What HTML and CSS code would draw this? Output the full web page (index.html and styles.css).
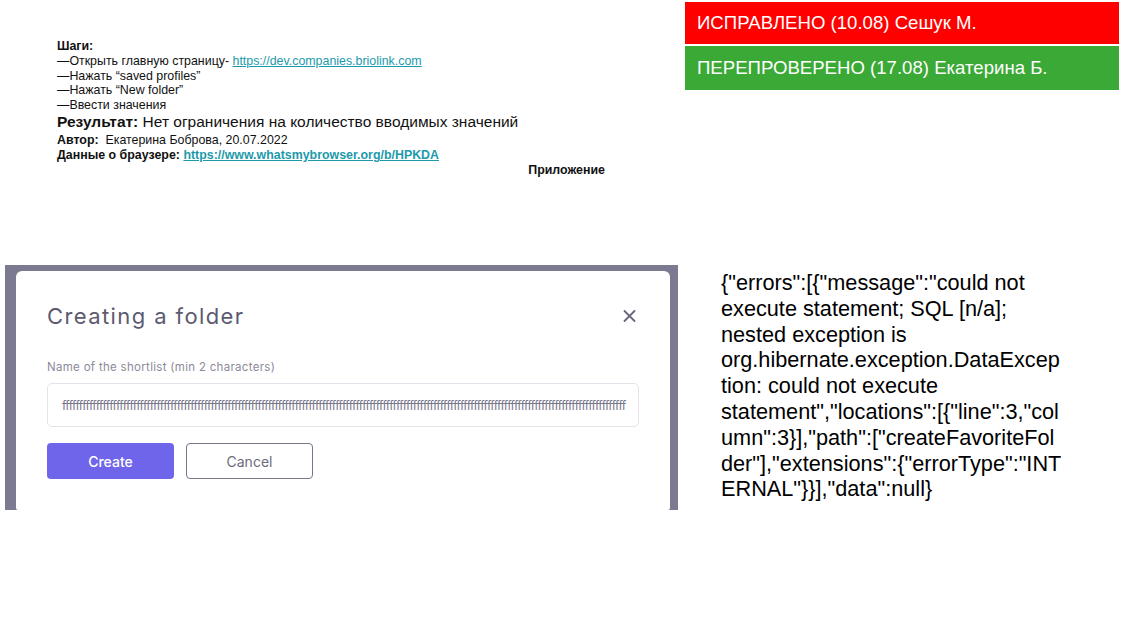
FILE: index.html
```html
<!DOCTYPE html>
<html lang="ru">
<head>
<meta charset="utf-8">
<title>Bug report</title>
<link rel="stylesheet" href="styles.css">
</head>
<body>
<div class="page">
  <div class="top">
    <div class="notes">
      <div class="line"><b>Шаги:</b></div>
      <div class="line">—Открыть главную страницу- <a class="link" href="#">https://dev.companies.briolink.com</a></div>
      <div class="line">—Нажать “saved profiles”</div>
      <div class="line">—Нажать “New folder”</div>
      <div class="line">—Ввести значения</div>
      <div class="result"><b>Результат:</b> Нет ограничения на количество вводимых значений</div>
      <div class="line meta"><b>Автор:</b>&nbsp; Екатерина Боброва, 20.07.2022</div>
      <div class="line"><b>Данные о браузере: <a class="link" href="#">https://www.whatsmybrowser.org/b/HPKDA</a></b></div>
      <div class="line attach"><b>Приложение</b></div>
    </div>
    <div class="status">
      <div class="badge red">ИСПРАВЛЕНО (10.08) Сешук М.</div>
      <div class="badge green">ПЕРЕПРОВЕРЕНО (17.08) Екатерина Б.</div>
    </div>
  </div>
  <div class="bottom">
    <div class="shot">
      <div class="dialog">
        <div class="dlg-head">
          <div class="dlg-title">Creating a folder</div>
          <svg class="close" width="13" height="12" viewBox="0 0 13 12"><path d="M1.5 1 L11.5 11 M11.5 1 L1.5 11" stroke="#67667a" stroke-width="1.8" stroke-linecap="round"/></svg>
        </div>
        <div class="dlg-label">Name of the shortlist (min 2 characters)</div>
        <div class="dlg-input"><div class="dlg-value">fffffffffffffffffffffffffffffffffffffffffffffffffffffffffffffffffffffffffffffffffffffffffffffffffffffffffffffffffffffffffffffffffffffffffffffffffffffffffffffffffffffff</div></div>
        <div class="dlg-buttons">
          <div class="btn btn-primary">Create</div>
          <div class="btn btn-outline">Cancel</div>
        </div>
      </div>
    </div>
    <div class="json">{"errors":[{"message":"could not<br>execute statement; SQL [n/a];<br>nested exception is<br>org.hibernate.exception.DataExcep<br>tion: could not execute<br>statement","locations":[{"line":3,"col<br>umn":3}],"path":["createFavoriteFol<br>der"],"extensions":{"errorType":"INT<br>ERNAL"}}],"data":null}</div>
  </div>
</div>
</body>
</html>
```

FILE: styles.css
```css
html, body {
  margin: 0;
  padding: 0;
  background: #ffffff;
}

.page {
  width: 1121px;
  height: 629px;
  font-family: "Liberation Sans", Arial, sans-serif;
  color: #000;
}

.top {
  display: flex;
  height: 265px;
}

.notes {
  margin-left: 57px;
  width: 548px;
  padding-top: 39px;
  font-size: 12.4px;
  color: #111;
}

.line {
  line-height: 14.8px;
  white-space: nowrap;
}

.link {
  color: #1c9aab;
  text-decoration: underline;
}

.result {
  font-size: 15.5px;
  line-height: 18px;
  white-space: nowrap;
}

.meta {
  margin-top: 2px;
  line-height: 15px;
}

.attach {
  text-align: right;
  line-height: 15px;
}

.status {
  margin-left: 80px;
  margin-top: 2px;
  width: 434px;
  display: flex;
  flex-direction: column;
  gap: 2px;
}

.badge {
  color: #fff;
  font-size: 18.6px;
  padding-left: 12px;
  display: flex;
  align-items: center;
}

.red {
  background: #ff0000;
  height: 42px;
}

.green {
  background: #3aa935;
  height: 44px;
}

.bottom {
  display: flex;
}

.shot {
  margin-left: 5px;
  width: 673px;
  height: 245px;
  box-sizing: border-box;
  background: #7b7a91;
  padding: 6px 8px 0 11px;
}

.dialog {
  height: 100%;
  box-sizing: border-box;
  background: #fff;
  border-radius: 6px 6px 2px 2px;
  padding: 31px 31px 0 31px;
  font-family: Inter, "Noto Sans", sans-serif;
}

.dlg-head {
  display: flex;
  justify-content: space-between;
  align-items: center;
  height: 28px;
}

.dlg-title {
  font-size: 22px;
  color: #5c5a70;
  letter-spacing: 1.4px;
}

.close {
  margin-right: 3px;
}

.dlg-label {
  margin-top: 29px;
  font-size: 11.5px;
  line-height: 16px;
  color: #8c8a9b;
  letter-spacing: 0.3px;
}

.dlg-input {
  margin-top: 8px;
  height: 44px;
  box-sizing: border-box;
  border: 1px solid #e4e3eb;
  border-radius: 5px;
  padding: 0 13px 0 14px;
  display: flex;
  align-items: center;
}

.dlg-value {
  white-space: nowrap;
  font-size: 12px;
  color: #77768a;
  letter-spacing: -0.6px;
}

.dlg-buttons {
  margin-top: 16px;
  display: flex;
  gap: 12px;
}

.btn {
  width: 127px;
  height: 36px;
  box-sizing: border-box;
  border-radius: 4px;
  display: flex;
  align-items: center;
  justify-content: center;
  font-size: 14px;
}

.btn-primary {
  background: #6f65ea;
  color: #fff;
  font-weight: 500;
}

.btn-outline {
  border: 1px solid #77768a;
  color: #6c6b7b;
}

.json {
  margin-left: 43px;
  margin-top: 5px;
  font-size: 21.7px;
  line-height: 25.8px;
  white-space: nowrap;
  color: #000;
}
```
